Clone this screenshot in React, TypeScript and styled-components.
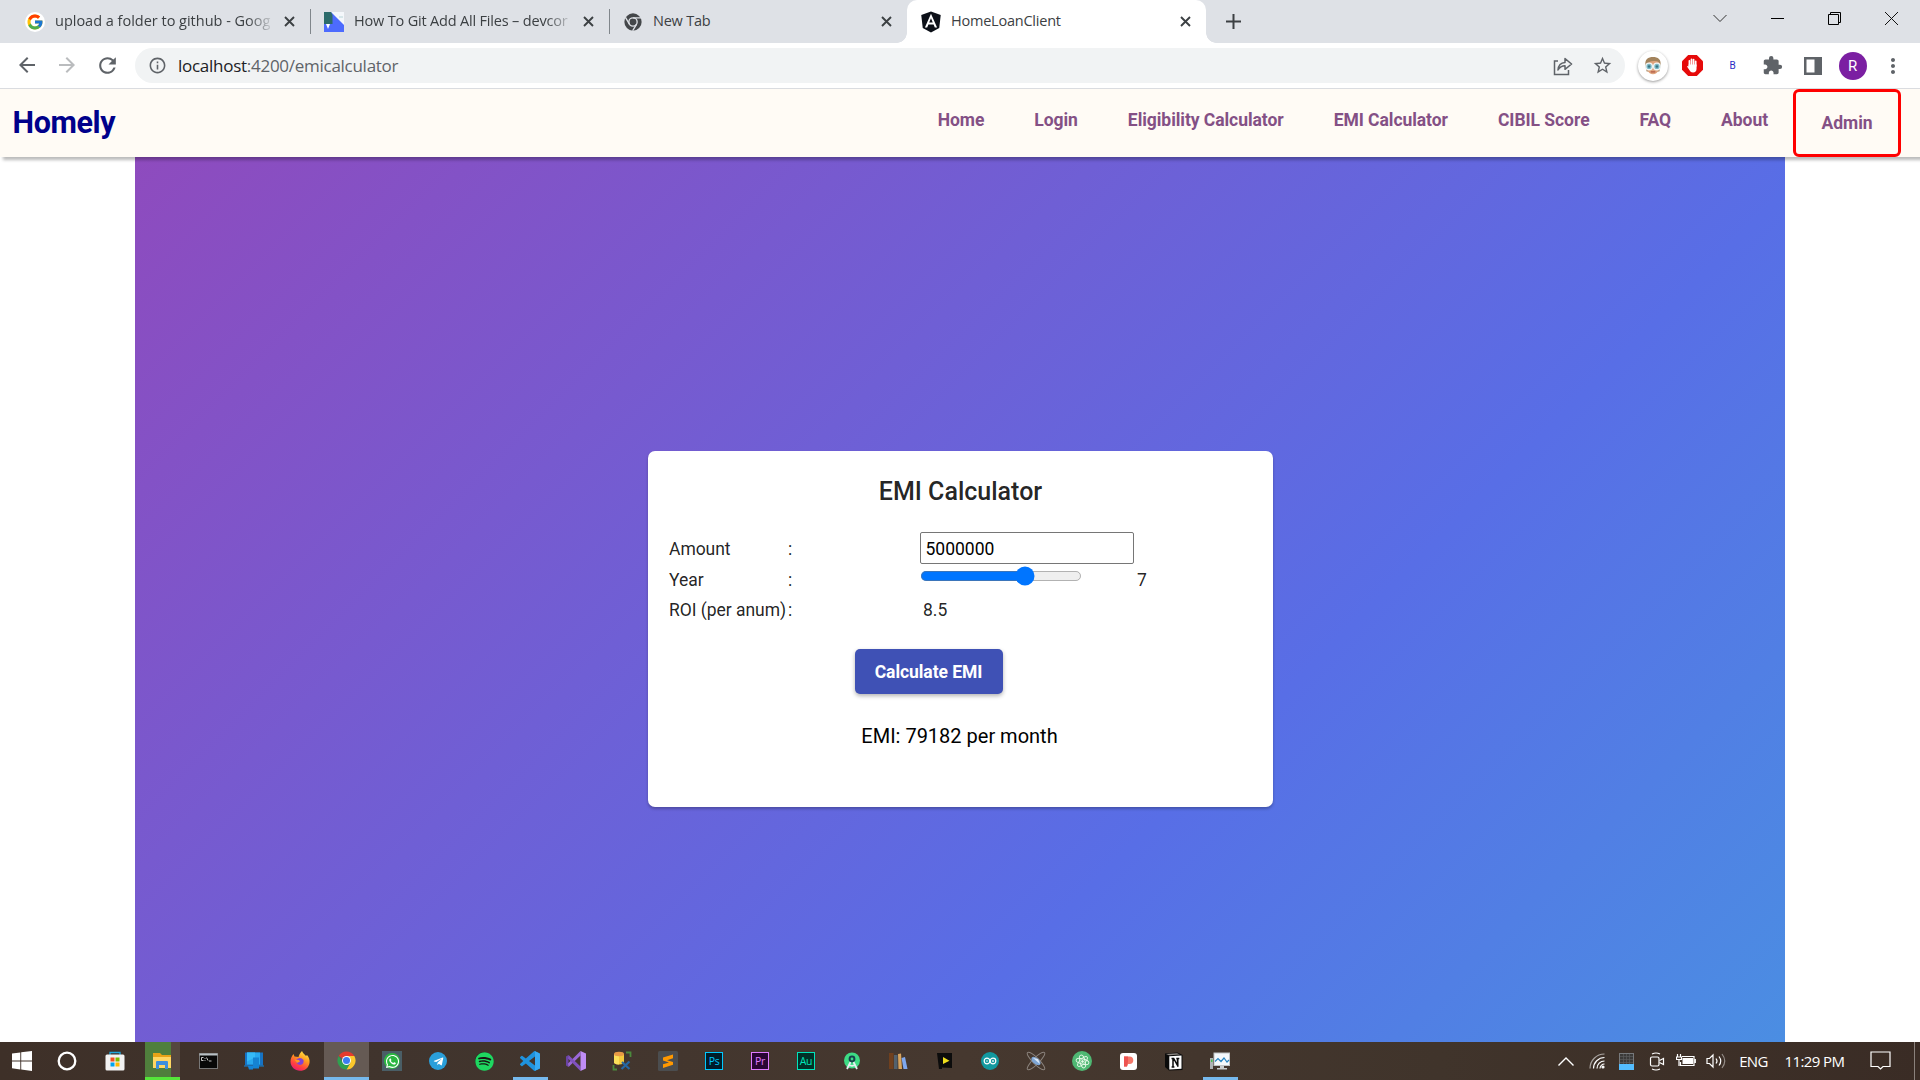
import React, { useState } from "react";
import styled, { createGlobalStyle } from "styled-components";
import { FcGoogle } from "react-icons/fc";
import { FaAngular, FaSpotify, FaTelegramPlane, FaWhatsapp } from "react-icons/fa";
import {
  MdArrowBack,
  MdArrowForward,
  MdExtension,
  MdInfoOutline,
  MdMoreVert,
  MdRefresh,
  MdStarBorder,
} from "react-icons/md";

const GlobalStyle = createGlobalStyle`
  *, *::before, *::after { box-sizing: border-box; }
  body { margin: 0; overflow: hidden; background: #fff; }
  svg { display: block; flex: none; }
`;

const ui = `"Open Sans", "Noto Sans", sans-serif`;
const roboto = `Roboto, "Liberation Sans", sans-serif`;

const Screen = styled.div`
  width: 1920px;
  height: 1080px;
  display: flex;
  flex-direction: column;
  overflow: hidden;
  background: #fff;
`;

/* ---------- browser chrome ---------- */

const TabStrip = styled.div`
  height: 43px;
  flex: none;
  display: flex;
  background: #dee1e6;
  padding-left: 10px;
`;

const TabBox = styled.div<{ $width: number; $active?: boolean; $inset?: number }>`
  position: relative;
  width: ${(p) => p.$width}px;
  height: 43px;
  display: flex;
  align-items: center;
  padding: 0 15px 0 ${(p) => p.$inset ?? 13}px;
  background: ${(p) => (p.$active ? "#fff" : "transparent")};
  border-radius: 10px 10px 0 0;
  &::before,
  &::after {
    content: "";
    display: ${(p) => (p.$active ? "block" : "none")};
    position: absolute;
    bottom: 0;
    width: 10px;
    height: 10px;
  }
  &::before {
    left: -10px;
    background: radial-gradient(circle at 0 0, transparent 9.5px, #fff 10px);
  }
  &::after {
    right: -10px;
    background: radial-gradient(circle at 100% 0, transparent 9.5px, #fff 10px);
  }
`;

const TabDivider = styled.i`
  width: 1px;
  height: 25px;
  margin-top: 9px;
  background: #80868b;
`;

const Favicon = styled.span`
  width: 20px;
  height: 20px;
  flex: none;
  display: flex;
  align-items: center;
  justify-content: center;
  border-radius: 50%;
`;

const RoundFavicon = styled(Favicon)`
  background: #fff;
`;

const TabTitle = styled.span<{ $spacing?: number; $fade?: boolean }>`
  flex: 1;
  min-width: 0;
  margin-left: 10px;
  white-space: nowrap;
  font: 400 14.5px/22px ${ui};
  letter-spacing: ${(p) => p.$spacing ?? -0.22}px;
  color: #3c4043;
  padding-bottom: 1px;
  mask-image: ${(p) => (p.$fade ? "linear-gradient(90deg, #000 calc(100% - 28px), transparent)" : "none")};
`;

const CloseSlot = styled.span`
  width: 12px;
  flex: none;
  display: flex;
  justify-content: center;
  margin-left: 8px;
`;

const NewTab = styled.div`
  width: 54px;
  display: flex;
  align-items: center;
  justify-content: center;
`;

const WindowControls = styled.div`
  margin-left: auto;
  display: flex;
  height: 37px;
`;

const WindowButton = styled.span`
  width: 57.2px;
  display: flex;
  align-items: center;
  justify-content: center;
`;

const Toolbar = styled.div`
  height: 46px;
  flex: none;
  display: flex;
  align-items: center;
  background: #fff;
  border-bottom: 1px solid #dadce0;
  color: #5f6368;
`;

const NavButton = styled.span<{ $disabled?: boolean }>`
  width: 40px;
  display: flex;
  justify-content: center;
  color: ${(p) => (p.$disabled ? "#babcbe" : "#5f6368")};
`;

const NavButtons = styled.div`
  display: flex;
  width: 135px;
  padding-left: 7px;
`;

const Omnibox = styled.div`
  width: 1490px;
  height: 35px;
  border-radius: 18px;
  background: #f1f3f4;
  display: flex;
  align-items: center;
  padding: 0 12px 0 13px;
`;

const Url = styled.span`
  flex: 1;
  margin-left: 11px;
  font: 400 17px/24px ${ui};
  letter-spacing: -0.27px;
  color: #5f6368;
  b {
    font-weight: 400;
    color: #202124;
  }
`;

const OmniActions = styled.span`
  display: flex;
  align-items: center;
  gap: 19px;
`;

const Extensions = styled.div`
  display: flex;
  margin-left: 7.5px;
`;

const ExtensionSlot = styled.span`
  width: 40px;
  display: flex;
  align-items: center;
  justify-content: center;
`;

const FaceBadge = styled.span`
  width: 30px;
  height: 30px;
  border-radius: 50%;
  background: #fff;
  box-shadow: 0 1px 3px rgba(0, 0, 0, 0.4);
  display: flex;
  align-items: center;
  justify-content: center;
`;

const LetterB = styled.span`
  font: 400 10px/12px ${roboto};
  color: #2c2cc4;
`;

const Profile = styled.span`
  width: 28px;
  height: 28px;
  border-radius: 50%;
  background: #7b1fa2;
  color: #fff;
  font: 400 15px/28px ${roboto};
  text-align: center;
`;

/* ---------- page ---------- */

const SiteNav = styled.nav`
  position: relative;
  z-index: 1;
  height: 68px;
  flex: none;
  display: flex;
  background: #fffbf5;
  box-shadow: 3px 3px 3px rgba(0, 0, 0, 0.27);
  padding: 0 19px 0 12.5px;
`;

const Brand = styled.span`
  margin-right: auto;
  font: 700 30.5px/68px ${roboto};
  letter-spacing: -0.4px;
  color: #00008b;
`;

const NavLink = styled.a<{ $boxed?: boolean }>`
  padding: 0 ${(p) => (p.$boxed ? 25.5 : 25)}px;
  font: 700 17.5px/62px ${roboto};
  letter-spacing: -0.05px;
  color: #845085;
  border: ${(p) => (p.$boxed ? "3px solid #f00" : "none")};
  border-radius: 6px;
`;

const Viewport = styled.main`
  height: 885px;
  flex: none;
  overflow: hidden;
  padding: 0 135px;
`;

const Hero = styled.section`
  height: 944px;
  display: flex;
  align-items: center;
  justify-content: center;
  background: linear-gradient(135deg, #8e4bbe 0%, #586ee6 65%, #4a90e2 100%);
`;

const Card = styled.form`
  width: 625px;
  height: 356px;
  border-radius: 7px;
  background: #fff;
  box-shadow: 0 2px 3px rgba(0, 0, 0, 0.25);
  display: flex;
  flex-direction: column;
  padding: 24px 20px 0 21px;
  font: 400 17.5px/30px ${roboto};
  color: rgba(0, 0, 0, 0.87);
`;

const CardTitle = styled.h1`
  margin: 0;
  font: 500 25px/34px ${roboto};
  text-align: center;
`;

const Fields = styled.div`
  margin-top: 23px;
  display: grid;
  grid-template-columns: 119px 132px 214px 1fr;
  grid-template-rows: 33px 30px 30px;
  align-items: center;
`;

const Label = styled.span`
  white-space: nowrap;
  padding-left: 0.5px;
  letter-spacing: -0.04px;
`;

const Value = styled.span`
  padding-left: 3.5px;
`;

const AmountInput = styled.input`
  width: 214px;
  height: 32px;
  align-self: start;
  border: 1px solid #767676;
  border-radius: 2px;
  padding: 2px 5px 0;
  font: 400 17.5px ${roboto};
  color: #000;
  outline: none;
`;

const YearSlider = styled.input`
  zoom: 1.25;
  width: 130px;
  margin: 1px 0 0;
  align-self: start;
  accent-color: #0075ff;
`;

const CalculateButton = styled.button`
  align-self: flex-start;
  margin: 24px 0 0 186px;
  width: 148px;
  height: 45px;
  border: 0;
  border-radius: 5px;
  padding: 1px 0 0;
  background: #3f51b5;
  box-shadow: 0 2px 4px rgba(0, 0, 0, 0.3);
  color: #fff;
  font: 700 17.5px/44px ${roboto};
  letter-spacing: -0.06px;
`;

const Result = styled.p`
  margin: 27px 2px 0 0;
  font: 400 20px/30px ${roboto};
  color: #000;
  text-align: center;
`;

/* ---------- taskbar ---------- */

const Taskbar = styled.footer`
  height: 38px;
  flex: none;
  display: flex;
  background: linear-gradient(90deg, #3e3028 0%, #40342d 20%, #46382f 50%, #40342b 75%, #3a2c25 100%);
`;

const SystemButtons = styled.div`
  width: 139px;
  display: flex;
`;

const SystemButton = styled.span<{ $width: number }>`
  width: ${(p) => p.$width}px;
  flex: none;
  display: flex;
  align-items: center;
  justify-content: center;
`;

const TaskSlot = styled.span`
  width: 46px;
  display: flex;
  justify-content: center;
`;

const TaskButton = styled.span<{ $state?: string }>`
  width: ${(p) => (p.$state === "focused" ? 45 : 35)}px;
  display: flex;
  align-items: center;
  justify-content: center;
  padding-top: ${(p) => (p.$state ? 2 : 0)}px;
  border-bottom: ${(p) => (p.$state ? "3px solid" : "0 solid")};
  border-color: ${(p) => (p.$state === "progress" ? "#55e63a" : "#76b9ed")};
  background: ${(p) =>
    p.$state === "focused"
      ? "#655a54"
      : p.$state === "progress"
      ? "linear-gradient(90deg, #4f7f3c 26px, #55473f 26px)"
      : "transparent"};
`;

const AdobeTile = styled.span<{ $color: string; $bg: string }>`
  width: 18px;
  height: 18px;
  border: 1px solid ${(p) => p.$color};
  background: ${(p) => p.$bg};
  color: ${(p) => p.$color};
  font: 400 10.5px/16px ${ui};
  letter-spacing: -0.3px;
  text-align: center;
`;

const WhatsappTile = styled.span`
  width: 20px;
  height: 20px;
  background: #4a5e66;
  display: flex;
  align-items: center;
  justify-content: center;
`;

const Disc = styled.span<{ $size: number; $bg: string }>`
  width: ${(p) => p.$size}px;
  height: ${(p) => p.$size}px;
  border-radius: 50%;
  background: ${(p) => p.$bg};
  display: flex;
  align-items: center;
  justify-content: center;
`;

const Tray = styled.div`
  margin-left: auto;
  display: flex;
  align-items: center;
  color: #fff;
`;

const TrayItem = styled.span<{ $width: number }>`
  width: ${(p) => p.$width}px;
  display: flex;
  align-items: center;
  justify-content: center;
`;

const TrayText = styled(TrayItem)`
  font: 400 15px/20px ${ui};
  letter-spacing: -0.6px;
  white-space: nowrap;
`;

const ShowDesktop = styled.i`
  width: 6px;
  height: 38px;
  border-left: 1px solid #8a817c;
`;

/* ---------- icons ---------- */

const CloseIcon = () => (
  <svg width="11" height="11" viewBox="0 0 11 11" stroke="#3c4043" strokeWidth="1.9">
    <path d="M1 1l9 9M10 1l-9 9" />
  </svg>
);

const DevconnectedIcon = () => (
  <svg width="20" height="20" viewBox="0 0 20 20">
    <rect width="20" height="20" fill="#4d6bfe" />
    <path d="M7 0h13v13z" fill="#f4f7fb" />
    <path d="M0 0h7l1.500 3v9H0z" fill="#2c6b6b" />
    <path d="M2 12h4l-2 5z" fill="#fff" />
    <path d="M15 5h4" stroke="#b8d5d8" />
  </svg>
);

const ChromeMono = () => (
  <svg width="18" height="18" viewBox="0 0 20 20">
    <circle cx="10" cy="10" r="9.600" fill="#44474a" />
    <g fill="none" stroke="#dee1e6" strokeWidth="1.500">
      <circle cx="10" cy="10" r="4.600" />
      <path d="M10 5.400h9M6 12.300L1.600 4.800M14 12.300L9.600 19.800" />
    </g>
  </svg>
);

const ChromeColor = () => (
  <svg width="19" height="19" viewBox="0 0 20 20">
    <path d="M10 10L1.770 5.250A9.500 9.500 0 0 1 18.230 5.250z" fill="#e53a2d" />
    <path d="M10 5.250h8.230A9.500 9.500 0 0 1 10 19.500l4-7.200z" fill="#fcc82c" />
    <path d="M1.770 5.250A9.500 9.500 0 0 0 10 19.500l4-7.200-8-.3z" fill="#2fa04f" />
    <circle cx="10" cy="10" r="4.700" fill="#fff" />
    <circle cx="10" cy="10" r="3.700" fill="#3c7df0" />
  </svg>
);

const ShareIcon = () => (
  <svg width="20" height="20" viewBox="0 0 20 20" fill="none" stroke="#5f6368" strokeWidth="1.500">
    <path d="M5 5H1.500v13.500h14V14" />
    <path d="M5 14c.4-4.800 3-7.400 7-7.600V2.600L18.600 8 12 13.300V9.800c-3.200 0-5.200 1-7 4.200z" strokeLinejoin="round" />
  </svg>
);

const FaceIcon = () => (
  <svg width="20" height="20" viewBox="0 0 20 22">
    <path d="M2 12C0 3 5 1 10 1s10 2 8 11l-1 5H3z" fill="#a3835c" />
    <path d="M3.500 9Q6 5 12 5.500t4.500 3.500v6Q14 20 10 20T3.500 15z" fill="#dfa37c" />
    <circle cx="5.700" cy="11.500" r="3.600" fill="#79b8c6" stroke="#eef4f5" strokeWidth="1.500" />
    <circle cx="14.300" cy="11.500" r="3.600" fill="#79b8c6" stroke="#eef4f5" strokeWidth="1.500" />
    <circle cx="5.700" cy="11.500" r="1.400" fill="#3a7482" />
    <circle cx="14.300" cy="11.500" r="1.400" fill="#3a7482" />
    <path d="M7.500 17.500h5" stroke="#ad5442" strokeWidth="1.300" />
  </svg>
);

const AdblockIcon = () => (
  <svg width="21" height="21" viewBox="0 0 21 21">
    <path d="M6.200 0h8.600L21 6.200v8.600L14.800 21H6.200L0 14.800V6.200z" fill="#e60a0a" />
    <g stroke="#fff" strokeWidth="1.700" strokeLinecap="round" fill="none">
      <path d="M7.400 11V5.800M9.500 10V4.300M11.600 10V4.600M13.700 11V6.300" />
    </g>
    <path d="M6.550 9.500h8v4.200Q14.500 17.500 11 17.500q-2.500 0-3.500-2.200L5 11.600q.8-1 1.600 0z" fill="#fff" />
  </svg>
);

const SidePanelIcon = () => (
  <svg width="18" height="18" viewBox="0 0 18 18">
    <path d="M0 0h18v18H0zM2.500 2.500v13h8v-13z" fill="#5f6368" fillRule="evenodd" />
  </svg>
);

const line = { fill: "none", stroke: "#fff", strokeWidth: 1.2 };

const WindowsIcon = () => (
  <svg width="20" height="20" viewBox="0 0 20 20" fill="#fff">
    <path d="M0 2.600L8.300 1.500v8H0zM9.200 1.300L20 0v9.500H9.200zM0 10.400h8.300v8L0 17.300zM9.200 10.400H20V20L9.200 18.600z" />
  </svg>
);

const StoreIcon = () => (
  <svg width="20" height="20" viewBox="0 0 20 20">
    <path d="M5 5V1.500h10V5" fill="none" stroke="#1fa7df" strokeWidth="1.300" />
    <rect x=".5" y="3.500" width="19" height="16" rx="1.500" fill="#f2f2f2" />
    <path d="M5.500 6.500h4v4h-4z" fill="#f25022" />
    <path d="M10.500 6.500h4v4h-4z" fill="#7fba00" />
    <path d="M5.500 11.500h4v4h-4z" fill="#00a4ef" />
    <path d="M10.500 11.500h4v4h-4z" fill="#ffb900" />
  </svg>
);

const FolderIcon = () => (
  <svg width="18" height="18" viewBox="0 0 18 18">
    <path d="M0 1h7l2 2h9v13H0z" fill="#e8a317" />
    <path d="M0 5h18v11H0z" fill="#ffd663" />
    <path d="M3 17V10q0-1 1-1h10q1 0 1 1v7h-3v-4H6v4z" fill="#3d8fdc" />
  </svg>
);

const TerminalIcon = () => (
  <svg width="19" height="18" viewBox="0 0 19 18">
    <rect x=".5" y="1.500" width="18" height="15" fill="#080808" stroke="#777" />
    <path d="M.5 2.500h18" stroke="#b9c0c4" strokeWidth="2" />
    <path d="M4.500 5.500H2.500v3h2M6 6v.8M6 8v.8M7.500 5.500l1.500 3M10 9h2.500" stroke="#ddd" fill="none" strokeWidth=".9" />
  </svg>
);

const DeviceIcon = () => (
  <svg width="20" height="20" viewBox="0 0 20 20">
    <path d="M1 1.500h18v13H1z" fill="#1673c4" />
    <path d="M3 1.500h13v12H3z" fill="#27a8ee" />
    <path d="M3 1.500h8v5l-8 4z" fill="#35baf7" />
    <path d="M9 6.500h6v11H9z" fill="#1583d2" />
    <path d="M0 14.500h20v1H0zM4 15.500h5v3H5z" fill="#1383d6" />
  </svg>
);

const FirefoxIcon = () => (
  <svg width="20" height="20" viewBox="0 0 20 20">
    <defs>
      <linearGradient id="ff" x1=".8" y1="0" x2=".3" y2="1">
        <stop offset="0" stopColor="#fff04a" />
        <stop offset=".4" stopColor="#ff9a1f" />
        <stop offset=".75" stopColor="#ff4040" />
        <stop offset="1" stopColor="#e81b76" />
      </linearGradient>
    </defs>
    <path d="M12 0c1 3 3 3.500 4 5l1-1c2 2 3 5 2.500 8C18.500 17 15 19.800 10 19.800S.5 16 .5 10.500C.5 7 2 5 3.500 3l1 2.500 4 .5C9 4 10 2 12 0z" fill="url(#ff)" />
    <path d="M6 9q4-4 7.500 0 .8 4.500-3.500 5-4-.5-4-5z" fill="#8042d6" />
    <path d="M4.500 8.500l4.500.5 1 1.500-3 1.500z" fill="#ff9a1f" />
  </svg>
);

const VsCodeIcon = () => (
  <svg width="20" height="20" viewBox="0 0 24 24">
    <path fill="#1f93de" d="M23.150 2.587L18.210.210a1.494 1.494 0 0 0-1.705.290l-9.460 8.630-4.120-3.128a.999.999 0 0 0-1.276.057L.327 7.261A1 1 0 0 0 .326 8.740L3.899 12 .326 15.260a1 1 0 0 0 .001 1.479L1.650 17.940a.999.999 0 0 0 1.276.057l4.120-3.128 9.460 8.630a1.492 1.492 0 0 0 1.704.290l4.942-2.377A1.500 1.500 0 0 0 24 20.060V3.939a1.500 1.500 0 0 0-.850-1.352zm-5.146 14.861L10.826 12l7.178-5.448v10.896z" />
    <path fill="#37a9f2" d="M18 .2l5.200 2.400q.8.500.8 1.400v16q0 1-.8 1.400L18 23.800z" />
  </svg>
);

const VisualStudioIcon = () => (
  <svg width="20" height="20" viewBox="0 0 20 20">
    <path d="M0 5.500L2.500 4v12L0 14.500z" fill="#6a43a5" />
    <path d="M2.500 16L14.500 4.500V0L2 12.500z" fill="#9a68d6" />
    <path d="M2.500 4L14.500 15.500V20L2 7.500z" fill="#8052bf" />
    <path d="M14.500 0L20 2.500v15L14.500 20z" fill="#c08df5" />
  </svg>
);

const DatabaseIcon = () => (
  <svg width="20" height="20" viewBox="0 0 20 20">
    <path d="M2 3v9q5 3 10 0V3z" fill="#f4c93c" />
    <path d="M2 3v9q2 1.500 5 1.500V3z" fill="#fbe05a" />
    <ellipse cx="7" cy="3" rx="5" ry="2.200" fill="#e89a45" />
    <path d="M14 1.500h4.500V6M1.500 14v4.500H5" stroke="#4b8a3c" strokeWidth="1.800" fill="none" />
    <path d="M9.500 18l8-7.500M10 11l7.500 7" stroke="#2467a5" strokeWidth="2.200" />
  </svg>
);

const SublimeIcon = () => (
  <svg width="20" height="20" viewBox="0 0 20 20">
    <rect width="20" height="20" rx="1.500" fill="#4b4d4f" />
    <path d="M5 6.500L15 3.500v3.800L9 9.200l6 1.800v2.700L5 17v-3.700l6-1.900-6-1.900z" fill="#ff9800" />
  </svg>
);

const AndroidStudioIcon = () => (
  <svg width="18" height="20" viewBox="0 0 18 20">
    <circle cx="9" cy="9.500" r="8" fill="#3ddc84" />
    <circle cx="9" cy="8" r="3.400" fill="#17424c" />
    <circle cx="9" cy="8" r="1.400" fill="#3ddc84" />
    <path d="M7.500 11L4 18M10.500 11l3.500 7M5.500 13.800q3.500 2 7 0" stroke="#e7eef0" strokeWidth="1.800" fill="none" />
  </svg>
);

const BooksIcon = () => (
  <svg width="20" height="18" viewBox="0 0 20 18">
    <path d="M1 1h4.500v16H1z" fill="#70401e" />
    <path d="M6 3h3.500v14H6z" fill="#53616d" />
    <path d="M10 2l3-.5L14 17h-3.500z" fill="#d8a45e" />
    <path d="M13.500 6l3.500-1 2.500 12h-4z" fill="#7fa8ee" />
  </svg>
);

const PlayIcon = () => (
  <svg width="18" height="18" viewBox="0 0 18 18">
    <path d="M2 1h15v15l-10-.5V17H4z" fill="#0c0c0c" />
    <path d="M8 5l6.500 3.800L8 12z" fill="#eede1c" />
  </svg>
);

const InfinityGlyph = () => (
  <svg width="14" height="8" viewBox="0 0 14 8" fill="none" stroke="#fff" strokeWidth="1.200">
    <circle cx="4" cy="4" r="2.800" />
    <circle cx="10" cy="4" r="2.800" />
    <path d="M3 4h2M9 4h2M10 3v2" strokeWidth=".8" />
  </svg>
);

const OrbitIcon = () => (
  <svg width="20" height="20" viewBox="0 0 20 20">
    <g fill="none" stroke="#8d857f" strokeWidth="1">
      <ellipse cx="10" cy="10" rx="12" ry="3.200" transform="rotate(45 10 10)" />
      <ellipse cx="10" cy="10" rx="12" ry="3.200" transform="rotate(-45 10 10)" />
    </g>
    <ellipse cx="10" cy="10" rx="5.500" ry="3" fill="#7ea6d6" transform="rotate(40 10 10)" />
    <path d="M7 7l5 1 2 5z" fill="#dce9f6" />
  </svg>
);

const AtomGlyph = () => (
  <svg width="15" height="15" viewBox="0 0 16 16" fill="none" stroke="#e6f8e8" strokeWidth="1">
    <ellipse cx="8" cy="8" rx="7" ry="2.800" transform="rotate(15 8 8)" />
    <ellipse cx="8" cy="8" rx="7" ry="2.800" transform="rotate(75 8 8)" />
    <ellipse cx="8" cy="8" rx="7" ry="2.800" transform="rotate(135 8 8)" />
    <circle cx="8" cy="8" r="1" fill="#e6f8e8" />
  </svg>
);

const PIcon = () => (
  <svg width="17" height="17" viewBox="0 0 17 17">
    <rect width="17" height="17" rx="3" fill="#fff" />
    <path d="M4 3.500h5.500q3.800.3 3.800 3.700T9.500 11H8l-1 2.500H4z" fill="#f4786a" />
    <path d="M4 3.500h4V9l-1 4.500H4z" fill="#ee5350" />
  </svg>
);

const NotionIcon = () => (
  <svg width="18" height="19" viewBox="0 0 18 19">
    <path d="M0 1.500L12.500.5 17.500 3v15L4 18.500 0 15z" fill="#0b0b0b" />
    <path d="M4.300 4.200L16.500 3.500v13.300L4.300 17.600z" fill="#fff" />
    <path d="M1 2l11-.8 3 1.400-11 .7z" fill="#8b8580" />
    <path d="M6.500 6.500h2.200l3.800 7V6.800M8 7v8M6.600 15h2.800M11.300 6.600h3M12.800 6.800v8" stroke="#0b0b0b" strokeWidth="1.500" fill="none" />
  </svg>
);

const MonitorIcon = () => (
  <svg width="20" height="18" viewBox="0 0 20 18">
    <path d="M0 6h3v11H0z" fill="#aeb2b4" />
    <path d="M1 7.500h1.500V10H1z" fill="#46c04a" />
    <rect x="4" y="1" width="15.500" height="12.500" fill="#f4f8fb" stroke="#c0c4c6" />
    <path d="M5 9.500l3-3 3 3 3-3.500 3 4 2-2" fill="none" stroke="#2784c0" strokeWidth="1.200" />
    <path d="M10 14h4v2h3v1.500H7V16h3z" fill="#c8cccd" />
  </svg>
);

const taskIcons: { icon: React.ReactNode; state?: string }[] = [
  { icon: <FolderIcon />, state: "progress" },
  { icon: <TerminalIcon /> },
  { icon: <DeviceIcon /> },
  { icon: <FirefoxIcon /> },
  { icon: <ChromeColor />, state: "focused" },
  { icon: <WhatsappTile><Disc $size={16} $bg="#2bb741"><FaWhatsapp size={15} color="#fff" /></Disc></WhatsappTile> },
  { icon: <Disc $size={18} $bg="#2a9fda"><FaTelegramPlane size={11} color="#fff" /></Disc> },
  { icon: <Disc $size={18} $bg="#191414"><FaSpotify size={19} color="#1ed760" /></Disc> },
  { icon: <VsCodeIcon />, state: "open" },
  { icon: <VisualStudioIcon /> },
  { icon: <DatabaseIcon /> },
  { icon: <SublimeIcon /> },
  { icon: <AdobeTile $color="#00c8ff" $bg="#001d2a">Ps</AdobeTile> },
  { icon: <AdobeTile $color="#e07bff" $bg="#2a0634">Pr</AdobeTile> },
  { icon: <AdobeTile $color="#00e4bb" $bg="#003128">Au</AdobeTile> },
  { icon: <AndroidStudioIcon /> },
  { icon: <BooksIcon /> },
  { icon: <PlayIcon /> },
  { icon: <Disc $size={18} $bg="#12999f"><InfinityGlyph /></Disc> },
  { icon: <OrbitIcon /> },
  { icon: <Disc $size={20} $bg="#4fb873"><AtomGlyph /></Disc> },
  { icon: <PIcon /> },
  { icon: <NotionIcon /> },
  { icon: <MonitorIcon />, state: "open" },
];

const navLinks = ["Home", "Login", "Eligibility Calculator", "EMI Calculator", "CIBIL Score", "FAQ", "About"];

export default function App() {
  const [amount, setAmount] = useState("5000000");
  const [year, setYear] = useState(7);

  return (
    <Screen>
      <GlobalStyle />
      <TabStrip>
        <TabBox $width={300} $inset={15}>
          <RoundFavicon><FcGoogle size={18} /></RoundFavicon>
          <TabTitle $fade $spacing={-0.01}>upload a folder to github - Goog</TabTitle>
          <CloseSlot><CloseIcon /></CloseSlot>
        </TabBox>
        <TabDivider />
        <TabBox $width={298}>
          <DevconnectedIcon />
          <TabTitle $fade $spacing={-0.18}>How To Git Add All Files – devcor</TabTitle>
          <CloseSlot><CloseIcon /></CloseSlot>
        </TabBox>
        <TabDivider />
        <TabBox $width={297}>
          <Favicon><ChromeMono /></Favicon>
          <TabTitle>New Tab</TabTitle>
          <CloseSlot><CloseIcon /></CloseSlot>
        </TabBox>
        <TabBox $width={299} $active $inset={14}>
          <Favicon><FaAngular size={24} color="#0c1018" /></Favicon>
          <TabTitle>HomeLoanClient</TabTitle>
          <CloseSlot><CloseIcon /></CloseSlot>
        </TabBox>
        <NewTab>
          <svg width="15" height="15" viewBox="0 0 15 15" stroke="#3c4043" strokeWidth="2">
            <path d="M7.500 0v15M0 7.500h15" />
          </svg>
        </NewTab>
        <WindowControls>
          <WindowButton>
            <svg width="14" height="9" viewBox="0 0 14 9" fill="none" stroke="#333"><path d="M.5 1L7 7.500 13.500 1" /></svg>
          </WindowButton>
          <WindowButton>
            <svg width="13" height="1" viewBox="0 0 13 1"><path d="M0 0h13v1H0z" /></svg>
          </WindowButton>
          <WindowButton>
            <svg width="13" height="13" viewBox="0 0 13 13" fill="none" stroke="#000">
              <path d="M.5 2.500h10v10H.5zM2.500 2.500v-2h10v10h-2" />
            </svg>
          </WindowButton>
          <WindowButton>
            <svg width="13" height="13" viewBox="0 0 13 13" stroke="#111"><path d="M0 0l13 13M13 0L0 13" /></svg>
          </WindowButton>
        </WindowControls>
      </TabStrip>

      <Toolbar>
        <NavButtons>
          <NavButton><MdArrowBack size={24} /></NavButton>
          <NavButton $disabled><MdArrowForward size={24} /></NavButton>
          <NavButton><MdRefresh size={25} /></NavButton>
        </NavButtons>
        <Omnibox>
          <MdInfoOutline size={19} />
          <Url><b>localhost</b>:4200/emicalculator</Url>
          <OmniActions>
            <ShareIcon />
            <MdStarBorder size={21} />
          </OmniActions>
        </Omnibox>
        <Extensions>
          <ExtensionSlot><FaceBadge><FaceIcon /></FaceBadge></ExtensionSlot>
          <ExtensionSlot><AdblockIcon /></ExtensionSlot>
          <ExtensionSlot><LetterB>B</LetterB></ExtensionSlot>
          <ExtensionSlot><MdExtension size={21} /></ExtensionSlot>
          <ExtensionSlot><SidePanelIcon /></ExtensionSlot>
          <ExtensionSlot><Profile>R</Profile></ExtensionSlot>
          <ExtensionSlot><MdMoreVert size={24} /></ExtensionSlot>
        </Extensions>
      </Toolbar>

      <SiteNav>
        <Brand>Homely</Brand>
        {navLinks.map((label) => (
          <NavLink key={label}>{label}</NavLink>
        ))}
        <NavLink $boxed>Admin</NavLink>
      </SiteNav>

      <Viewport>
        <Hero>
          <Card onSubmit={(e) => e.preventDefault()}>
            <CardTitle>EMI Calculator</CardTitle>
            <Fields>
              <Label>Amount</Label>
              <Label>:</Label>
              <AmountInput value={amount} onChange={(e) => setAmount(e.target.value)} />
              <span />
              <Label>Year</Label>
              <Label>:</Label>
              <YearSlider type="range" min={1} max={10} value={year} onChange={(e) => setYear(Number(e.target.value))} />
              <Value>{year}</Value>
              <Label>ROI (per anum)</Label>
              <Label>:</Label>
              <Value>8.5</Value>
            </Fields>
            <CalculateButton>Calculate EMI</CalculateButton>
            <Result>EMI: 79182 per month</Result>
          </Card>
        </Hero>
      </Viewport>

      <Taskbar>
        <SystemButtons>
          <SystemButton $width={44}><WindowsIcon /></SystemButton>
          <SystemButton $width={46}>
            <svg width="20" height="20" viewBox="0 0 20 20"><circle cx="10" cy="10" r="8.300" fill="none" stroke="#fff" strokeWidth="2.300" /></svg>
          </SystemButton>
          <SystemButton $width={50}><StoreIcon /></SystemButton>
        </SystemButtons>
        {taskIcons.map((t, i) => (
          <TaskSlot key={i}><TaskButton $state={t.state}>{t.icon}</TaskButton></TaskSlot>
        ))}
        <Tray>
          <TrayItem $width={46}>
            <svg width="16" height="9" viewBox="0 0 16 9" {...line} strokeWidth="1.400"><path d="M.5 8.500L8 1l7.500 7.500" /></svg>
          </TrayItem>
          <TrayItem $width={15}>
            <svg width="16" height="16" viewBox="0 0 16 16" {...line}>
              <path d="M1 15.500A14.500 14.500 0 0 1 15.500 1" stroke="#aaa5a1" />
              <path d="M4.500 15.500a11 11 0 0 1 11-11M8 15.500A7.500 7.500 0 0 1 15.500 8M11 15.500a4.500 4.500 0 0 1 4.500-4.500" />
              <circle cx="14" cy="14" r="1" fill="#fff" />
            </svg>
          </TrayItem>
          <TrayItem $width={45}>
            <svg width="15" height="17" viewBox="0 0 15 17">
              <path d="M0 0h15v17H0z" fill="#77797b" />
              <path d="M1 1h13v10H1z" fill="#3b3a39" />
              <path d="M1 3.500h13M1 6.500h13M1 9.500h13M4.500 1v10M7.500 1v10M10.500 1v10" stroke="#5c5c5c" strokeWidth=".7" />
              <path d="M0 11h15v6H0z" fill="#54bdff" />
            </svg>
          </TrayItem>
          <TrayItem $width={15}>
            <svg width="16" height="19" viewBox="0 0 16 19" {...line}>
              <rect x="1.500" y="5" width="8.500" height="9" rx="1.500" />
              <path d="M10.500 8.500l4-2v6l-4-2M3 2q4-2 8 0M3 17q4 2 8 0" />
            </svg>
          </TrayItem>
          <TrayItem $width={43}>
            <svg width="20" height="14" viewBox="0 0 20 14" {...line}>
              <path d="M6 2.500h12v9H4.500V8M19.300 5v4M1.500 0v3M4.500 0v3M.5 3h5v2.500H.5zM3 6v6" />
              <path d="M6.500 4h10.500v6H6.500z" fill="#fff" stroke="none" />
            </svg>
          </TrayItem>
          <TrayItem $width={18}>
            <svg width="21" height="16" viewBox="0 0 21 16" {...line}>
              <path d="M1 5.500h2.500L7 2v12l-3.500-3.500H1zM10 5.500q2 2.500 0 5M13 3.500q3.500 4.500 0 9" />
              <path d="M16 1q5.500 7 0 14" stroke="#958d88" />
            </svg>
          </TrayItem>
          <TrayText $width={57}>ENG</TrayText>
          <TrayText $width={65}>11:29 PM</TrayText>
          <TrayItem $width={67}>
            <svg width="21" height="20" viewBox="0 0 21 20" {...line}><path d="M1 1h19v14.500h-7L10.500 18 8 15.500H1z" /></svg>
          </TrayItem>
          <ShowDesktop />
        </Tray>
      </Taskbar>
    </Screen>
  );
}
